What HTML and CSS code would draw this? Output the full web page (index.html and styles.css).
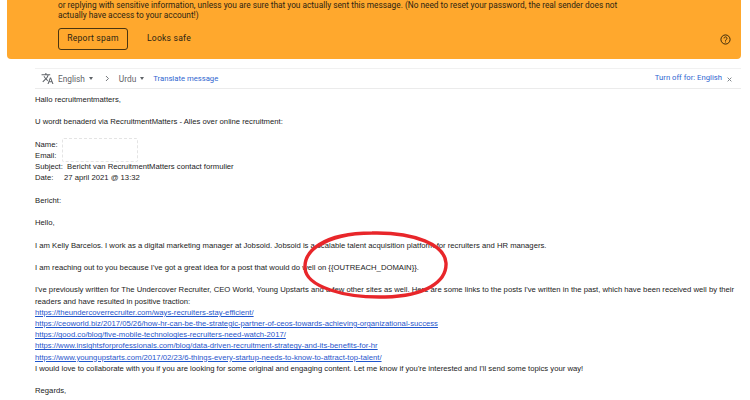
FILE: index.html
```html
<!DOCTYPE html>
<html lang="en">
<head>
<meta charset="utf-8">
<title>Message</title>
<link rel="stylesheet" href="styles.css">
</head>
<body>
<div class="page">
  <section class="banner">
    <p class="warn">or replying with sensitive information, unless you are sure that you actually sent this message. (No need to reset your password, the real sender does not<br>actually have access to your account!)</p>
    <div class="actions">
      <span class="btn">Report spam</span>
      <span class="safe">Looks safe</span>
      <svg class="help" viewBox="0 0 24 24" width="11" height="11"><circle cx="12" cy="12" r="10" fill="none" stroke="#2a1f08" stroke-width="2"/><path d="M8.8 9.6a3.2 3.2 0 1 1 5 2.6c-1.1.8-1.8 1.4-1.8 2.8" fill="none" stroke="#2a1f08" stroke-width="2"/><rect x="11" y="16.4" width="2" height="2" fill="#2a1f08"/></svg>
    </div>
  </section>
  <div class="content">
    <div class="translate">
      <svg class="tr-icon" viewBox="0 0 24 24" width="13" height="13"><path fill="#5f6368" d="M12.87 15.07l-2.54-2.51.03-.03A17.5 17.5 0 0 0 14.07 6H17V4h-7V2H8v2H1v2h11.17A15.7 15.7 0 0 1 9 11.35 15.7 15.7 0 0 1 6.69 8h-2a17.6 17.6 0 0 0 2.98 4.56l-5.09 5.02L4 19l5-5 3.11 3.11.76-2.04zM18.5 10h-2L12 22h2l1.12-3h4.75L21 22h2l-4.5-12zm-2.62 7l1.62-4.33L19.12 17h-3.24z"/></svg>
      <span class="lang">English</span><span class="caret"></span>
      <svg class="chev" viewBox="0 0 8 10" width="5" height="7"><path d="M1.5 1l4 4-4 4" fill="none" stroke="#5f6368" stroke-width="1.4"/></svg>
      <span class="lang">Urdu</span><span class="caret"></span>
      <a class="tr-link">Translate message</a>
      <span class="spacer"></span>
      <a class="tr-off">Turn off for: English</a>
      <svg class="close" viewBox="0 0 8 8" width="5" height="5"><path d="M1 1l6 6M7 1l-6 6" stroke="#80868b" stroke-width="1.6"/></svg>
    </div>
    <div class="mail">
      <p>Hallo recruitmentmatters,</p>
      <p>U wordt benaderd via RecruitmentMatters - Alles over online recruitment:</p>
      <div class="fields">
        <div>Name:</div>
        <div>Email:</div>
        <div>Subject:&nbsp; Bericht van RecruitmentMatters contact formulier</div>
        <div>Date:&nbsp;&nbsp;&nbsp;&nbsp; 27 april 2021 @ 13:32</div>
        <span class="redact"></span>
      </div>
      <p>Bericht:</p>
      <p>Hello,</p>
      <p>I am Kelly Barcelos. I work as a digital marketing manager at Jobsoid. Jobsoid is a scalable talent acquisition platform for recruiters and HR managers.</p>
      <p>I am reaching out to you because I've got a great idea for a post that would do well on {{OUTREACH_DOMAIN}}.</p>
      <p>I've previously written for The Undercover Recruiter, CEO World, Young Upstarts and a few other sites as well. Here are some links to the posts I've written in the past, which have been received well by their<br>readers and have resulted in positive traction:<br>
      <a>https://theundercoverrecruiter.com/ways-recruiters-stay-efficient/</a><br>
      <a>https://ceoworld.biz/2017/05/26/how-hr-can-be-the-strategic-partner-of-ceos-towards-achieving-organizational-success</a><br>
      <a>https://good.co/blog/five-mobile-technologies-recruiters-need-watch-2017/</a><br>
      <a>https://www.insightsforprofessionals.com/blog/data-driven-recruitment-strategy-and-its-benefits-for-hr</a><br>
      <a>https://www.youngupstarts.com/2017/02/23/6-things-every-startup-needs-to-know-to-attract-top-talent/</a><br>
      I would love to collaborate with you if you are looking for some original and engaging content. Let me know if you're interested and I'll send some topics your way!</p>
      <p>Regards,</p>
      <span class="redact-name"></span>
    </div>
  </div>
  <svg class="circle" viewBox="0 0 750 400" width="750" height="400"><path d="M372 233C322 233 304 252 305 268C306 287 345 298 385 297C425 296 447 282 446 263C445 245 415 232 372 233C350 233 330 238 318 246" fill="none" stroke="#e8262a" stroke-width="3.4"/></svg>
</div>
</body>
</html>
```
FILE: styles.css
```css
* { box-sizing: border-box; }
html, body { margin: 0; padding: 0; background: #fff; }
body { width: 750px; height: 400px; overflow: hidden; }
.page { position: relative; width: 750px; height: 400px; overflow: hidden; padding: 0 9px 0 7px; }
p { margin: 0; }
.banner { height: 59px; background: #ffa82d; border-radius: 0 0 4px 4px; padding: 1px 0 0 51px; color: #2c2412; font: 8.3px/9.8px Roboto, sans-serif; }
.warn { white-space: nowrap; height: 19px; }
.actions { display: flex; align-items: center; margin-top: 8px; height: 22px; padding-right: 10px; font-size: 8.6px; }
.btn { width: 70px; height: 22px; border: 1px solid #4a3510; border-radius: 3px; display: flex; align-items: center; justify-content: center; letter-spacing: .2px; }
.safe { margin-left: 19px; letter-spacing: .2px; }
.help { margin-left: auto; }
.content { padding-left: 28px; }
.translate { display: flex; align-items: center; height: 21px; margin-top: 9px; border-top: 1px solid #f1f1f1; border-bottom: 1px solid #ebebeb; padding-left: 6px; padding-right: 9px; font: 8.3px Roboto, sans-serif; color: #5f6368; }
.tr-icon { margin-right: 4px; }
.caret { width: 0; height: 0; border: 2.5px solid transparent; border-top: 3px solid #5f6368; border-bottom: 0; margin-left: 4px; }
.chev { margin: 0 9px 0 12px; }
.tr-link { color: #2f66d0; margin-left: 9px; font-size: 7.7px; }
.spacer { flex: 1; }
.tr-off { color: #2f66d0; margin-top: -3px; font-size: 7.7px; }
.close { margin-left: 5px; margin-top: 2px; }
.mail { padding-top: 5px; font: 7.7px/11.2px "Liberation Sans", Arial, sans-serif; color: #222; white-space: nowrap; }
.mail p { margin-bottom: 11.2px; }
.mail a { color: #1f55cc; text-decoration: underline; }
.fields { position: relative; margin-bottom: 11.2px; }
.redact { position: absolute; left: 27px; top: -1px; width: 76px; height: 24px; background: #fff; border: 1px dashed #e4e4e4; border-radius: 2px; }
.redact-name { display: block; width: 72px; height: 4px; border-top: 1px dashed #ddd; }
.circle { position: absolute; left: 0; top: 0; pointer-events: none; }
```
